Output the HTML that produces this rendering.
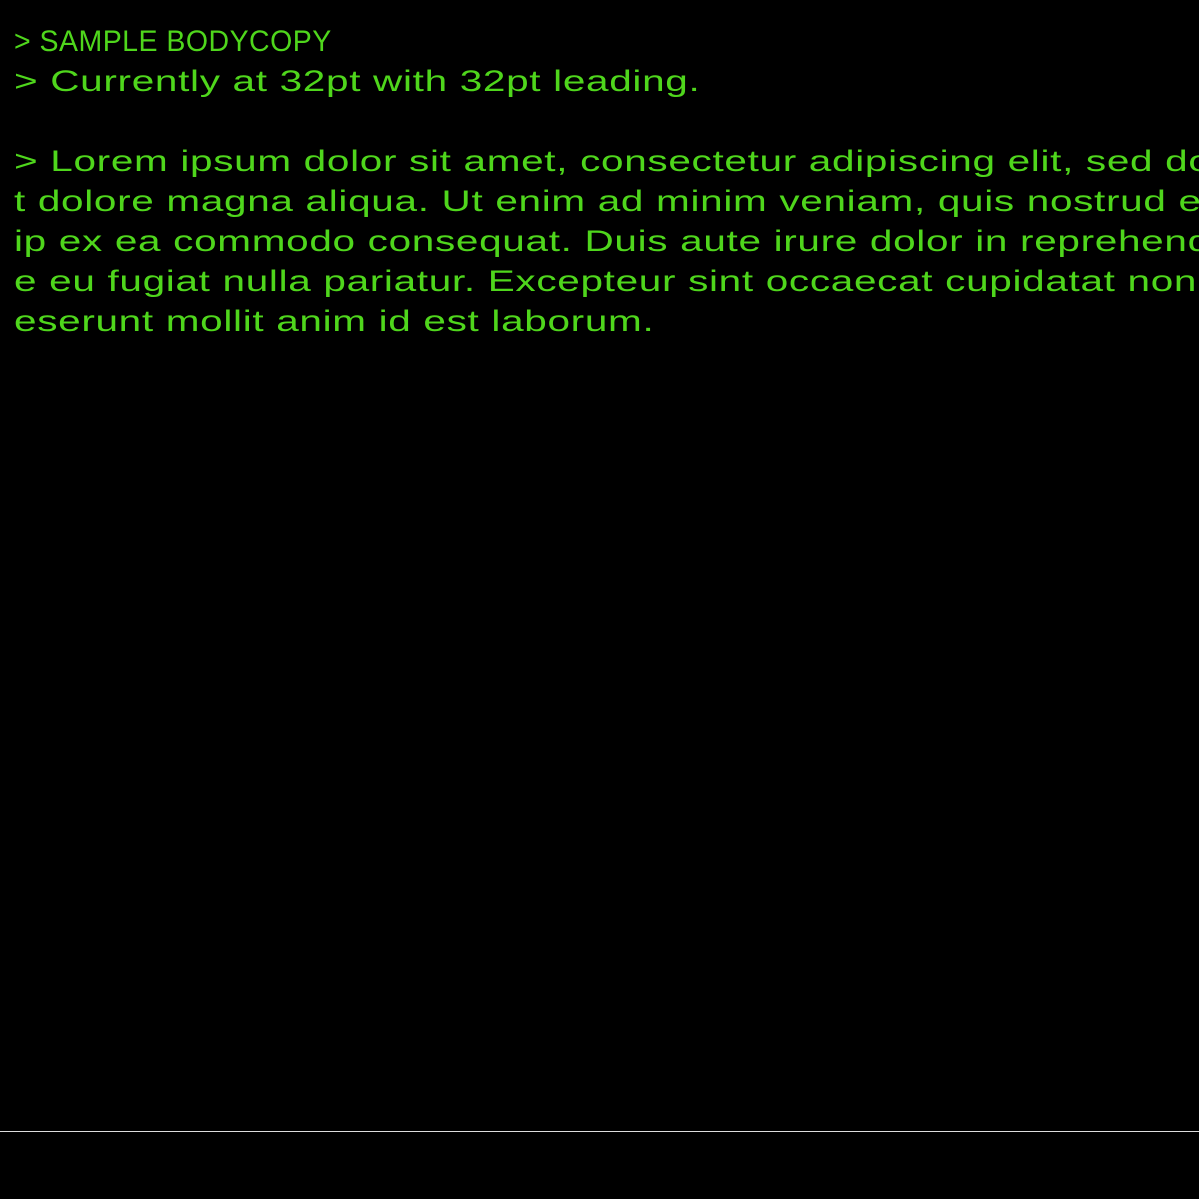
<!DOCTYPE html>
<html><head><style>
html,body{margin:0;padding:0;background:#000;width:1199px;height:1199px;overflow:hidden}
.t{position:absolute;left:14px;top:22px;width:1185px;height:400px;overflow:hidden;font-family:"Liberation Sans",sans-serif;font-size:30px;line-height:40px;color:#4fd61c;white-space:nowrap;letter-spacing:0.5px}
.t div{height:40px;transform:scaleX(1.35);transform-origin:0 0}
.t .h{transform:scaleX(0.95)}
.hr{position:absolute;left:0;top:1131px;width:1199px;height:1px;background:#ddd}
</style></head><body>
<div class="t">
<div class="h">&gt; SAMPLE BODYCOPY</div>
<div>&gt; Currently at 32pt with 32pt leading.</div>
<div></div>
<div>&gt; Lorem ipsum dolor sit amet, consectetur adipiscing elit, sed do eiusmod</div>
<div>t dolore magna aliqua. Ut enim ad minim veniam, quis nostrud exercitation</div>
<div>ip ex ea commodo consequat. Duis aute irure dolor in reprehenderit in</div>
<div>e eu fugiat nulla pariatur. Excepteur sint occaecat cupidatat non</div>
<div>eserunt mollit anim id est laborum.</div>
</div>
<div class="hr"></div>
</body></html>
